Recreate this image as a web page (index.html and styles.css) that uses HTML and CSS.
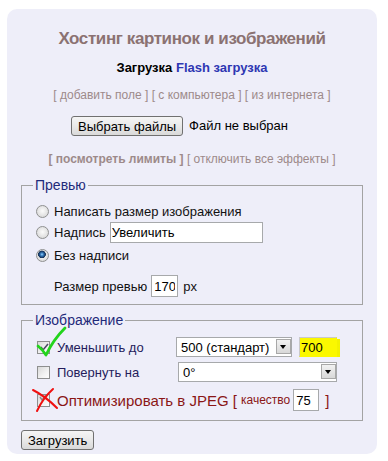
FILE: index.html
```html
<!DOCTYPE html>
<html lang="ru">
<head>
<meta charset="utf-8">
<title>Хостинг картинок и изображений</title>
<link rel="stylesheet" href="styles.css">
</head>
<body>
<div class="panel">
  <h1 class="title">Хостинг картинок и изображений</h1>
  <div class="modes"><span class="mode-active">Загрузка</span> <a class="mode-link" href="#">Flash загрузка</a></div>
  <div class="links">[ добавить поле ] [ с компьютера ] [ из интернета ]</div>
  <div class="file-row">
    <button class="btn" type="button">Выбрать файлы</button>
    <span class="file-status">Файл не выбран</span>
  </div>
  <div class="links limits"><b>[ посмотреть лимиты ]</b> [ отключить все эффекты ]</div>

  <fieldset class="group preview">
    <legend>Превью</legend>
    <label class="opt opt-1"><input class="radio" type="radio" name="preview">Написать размер изображения</label>
    <label class="opt opt-2"><input class="radio" type="radio" name="preview">Надпись <input class="text caption-input" type="text" value="Увеличить"></label>
    <label class="opt opt-3"><input class="radio" type="radio" name="preview" checked>Без надписи</label>
    <div class="size-row">Размер превью <input class="text size-input" type="text" value="170"> px</div>
  </fieldset>

  <fieldset class="group image">
    <legend>Изображение</legend>
    <div class="img-row row-resize">
      <label class="cb-label">
        <span class="cb-wrap">
          <input class="check" type="checkbox" checked>
          <svg class="mark-ok" width="40" height="36" viewBox="0 0 40 36" aria-hidden="true">
            <path d="M7 22 L9 25 L14 19" fill="none" stroke="#4b4b63" stroke-width="1.6"/>
            <path d="M4 21 Q9 25 12 30 Q19 15 31 3" fill="none" stroke="#22d41c" stroke-width="2.8" stroke-linecap="round" stroke-linejoin="round"/>
          </svg>
        </span>
        <span class="lbl">Уменьшить до</span>
      </label>
      <span class="select-wrap sel-size">
        <select class="select"><option>500 (стандарт)</option></select>
        <span class="arrow"></span>
      </span>
      <input class="text hl-input" type="text" value="700">
    </div>
    <div class="img-row row-rotate">
      <label class="cb-label">
        <span class="cb-wrap"><input class="check" type="checkbox"></span>
        <span class="lbl">Повернуть на</span>
      </label>
      <span class="select-wrap sel-rotate">
        <select class="select"><option>0°</option></select>
        <span class="arrow"></span>
      </span>
    </div>
    <div class="img-row row-jpeg">
      <label class="cb-label jpeg-label">
        <span class="cb-wrap">
          <input class="check" type="checkbox" checked>
          <svg class="mark-x" width="32" height="30" viewBox="0 0 32 30" aria-hidden="true">
            <path d="M9 10 L11 13 L15 8" fill="none" stroke="#8a8a8a" stroke-width="1.4"/>
            <path d="M2 3 Q14 9 26 21" fill="none" stroke="#f01010" stroke-width="2" stroke-linecap="round"/>
            <path d="M22 2 Q12 11 6 24" fill="none" stroke="#f01010" stroke-width="2" stroke-linecap="round"/>
          </svg>
        </span>
        <span class="lbl jpeg">Оптимизировать в JPEG [</span>
      </label>
      <span class="quality">качество</span>
      <input class="text quality-input" type="text" value="75">
      <span class="jpeg close">]</span>
    </div>
  </fieldset>

  <button class="btn submit" type="button">Загрузить</button>
</div>
</body>
</html>
```

FILE: styles.css
```css
body {
  margin: 9px 11px 0 7px;
  background: #fff;
  font-family: "Liberation Sans", Arial, sans-serif;
  font-size: 13px;
  color: #000;
}

.panel {
  background: #eeeef9;
  border-radius: 10px;
  padding: 19px 14px 4px 14px;
}

.title {
  margin: 0;
  font-size: 17px;
  letter-spacing: -0.4px;
  line-height: 22px;
  font-weight: bold;
  text-align: center;
  color: #8b7272;
}

.modes {
  margin-top: 10px;
  font-size: 13px;
  line-height: 16px;
  font-weight: bold;
  text-align: center;
}

.mode-link {
  color: #2e37b3;
  text-decoration: none;
}

.links {
  margin-top: 12px;
  font-size: 12px;
  line-height: 15px;
  text-align: center;
  color: #9d8a8a;
}

.limits {
  margin-top: 16px;
}

.file-row {
  margin-top: 13px;
  display: flex;
  justify-content: center;
  align-items: center;
  gap: 6px;
  padding-right: 25px;
  line-height: 20px;
}

.btn {
  font-family: "Liberation Sans", Arial, sans-serif;
  font-size: 13px;
  height: 20px;
  padding: 0 6px;
  border: 1px solid #707070;
  border-radius: 3px;
  background: linear-gradient(#f5f5f5, #e9e9e9 50%, #d9d9d9);
  color: #000;
}

.group {
  margin: 10px 0 0;
  padding: 8px 12px 7px 11px;
  border: 1px solid #a3a3a3;
}

.group legend {
  padding: 0 2px;
  font-size: 14px;
  line-height: 16px;
  color: #1f2a7a;
}

.opt {
  display: flex;
  align-items: center;
  height: 21px;
  color: #111;
}

.opt-3 {
  height: 25px;
}

.radio {
  appearance: none;
  -webkit-appearance: none;
  width: 13px;
  height: 13px;
  margin: 0 5px 0 3px;
  border: 1px solid #8f9090;
  border-radius: 50%;
  background: radial-gradient(circle at 50% 45%, #fbfbfb, #dedede 70%, #cfcfcf);
  box-sizing: border-box;
}

.radio:checked {
  background:
    radial-gradient(circle at 45% 40%, #9fd4ff 0, #3e86c6 1.3px, #173e6e 3px, #1c3455 3.6px, transparent 4.1px),
    radial-gradient(circle at 50% 45%, #fbfbfb, #dedede 70%, #cfcfcf);
}

.text {
  font-family: "Liberation Sans", Arial, sans-serif;
  font-size: 13px;
  color: #000;
  border: 1px solid #a7a9ab;
  background: #fff;
  padding: 0 1px;
  margin: 0;
  box-sizing: border-box;
}

.caption-input {
  width: 153px;
  height: 21px;
  margin-left: 4px;
}

.size-row {
  display: flex;
  align-items: center;
  height: 22px;
  margin-top: 7px;
  padding-left: 21px;
  color: #111;
}

.size-input {
  width: 27px;
  height: 22px;
  margin: 0 5px 0 4px;
  padding: 0 2px;
}

.image {
  margin-top: 7px;
  padding: 9px 12px 9px 11px;
}

.img-row {
  display: flex;
  align-items: center;
  height: 20px;
}

.row-rotate {
  margin-top: 5px;
}

.row-jpeg {
  margin-top: 7px;
  height: 22px;
}

.cb-label {
  display: flex;
  align-items: center;
  width: 143px;
  flex: none;
}

.jpeg-label {
  width: auto;
}

.cb-wrap {
  position: relative;
  display: inline-flex;
  width: 13px;
  height: 13px;
  margin: 0 7px 0 4px;
}

.check {
  appearance: none;
  -webkit-appearance: none;
  width: 13px;
  height: 13px;
  margin: 0;
  border: 1px solid #8e8f8f;
  background: linear-gradient(135deg, #d9d9d9, #f2f2f2 60%, #fdfdfd);
  box-sizing: border-box;
}

.mark-ok {
  position: absolute;
  left: -3px;
  top: -16px;
  overflow: visible;
}

.mark-x {
  position: absolute;
  left: -6px;
  top: -7px;
  overflow: visible;
}

.lbl {
  color: #241c5c;
}

.jpeg {
  color: #8a1616;
  font-size: 15px;
}

.select-wrap {
  position: relative;
  display: inline-flex;
}

.select {
  appearance: none;
  -webkit-appearance: none;
  font-family: "Liberation Sans", Arial, sans-serif;
  font-size: 13px;
  color: #000;
  height: 20px;
  margin: 0;
  padding: 0 18px 0 4px;
  border: 1px solid #a7a9ab;
  border-radius: 0;
  background: #fff;
  box-sizing: border-box;
}

.sel-size .select {
  width: 116px;
}

.sel-rotate {
  margin-left: 2px;
}

.sel-rotate .select {
  width: 159px;
}

.arrow {
  position: absolute;
  right: 1px;
  top: 2px;
  width: 15px;
  height: 15px;
  box-sizing: border-box;
  border: 1px solid #a8a8a8;
  background: linear-gradient(#f2f2f2, #d8d8d8);
  pointer-events: none;
}

.arrow::after {
  content: "";
  position: absolute;
  left: 3px;
  top: 5px;
  border-left: 3.5px solid transparent;
  border-right: 3.5px solid transparent;
  border-top: 4px solid #000;
}

.hl-input {
  width: 38px;
  height: 20px;
  margin-left: 7px;
  background: #fbf800;
  border-color: #c9c9c9 #fbf800 #fbf800 #c9c9c9;
  box-shadow: 4px 1px 0 -1px #f3f200;
}

.quality {
  color: #8a1616;
  font-size: 12px;
  margin-left: 4px;
}

.quality-input {
  width: 26px;
  height: 22px;
  margin-left: 3px;
  padding: 0 2px;
}

.close {
  margin-left: 6px;
}

.submit {
  display: block;
  margin-top: 9px;
  padding: 0 6px;
}
```
